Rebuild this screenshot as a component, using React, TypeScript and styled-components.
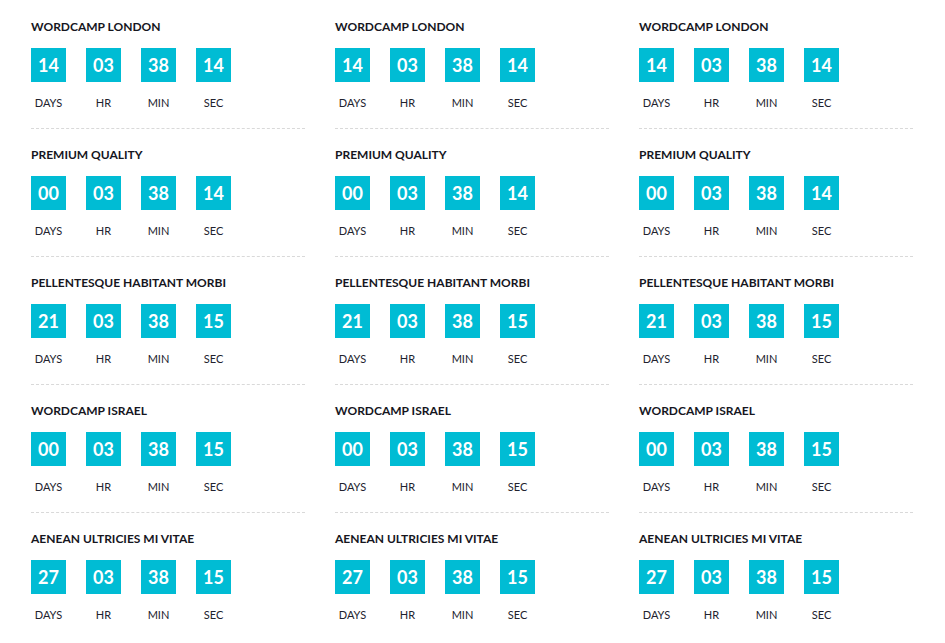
import React from "react";
import styled, { createGlobalStyle } from "styled-components";

const Global = createGlobalStyle`
  html, body { margin: 0; padding: 0; background: #fff; }
  body { font-family: "Source Sans Pro", "Lato", "Noto Sans", sans-serif; }
`;

const Page = styled.div`
  display: grid;
  grid-template-columns: repeat(3, 274px);
  column-gap: 30px;
  padding: 1px 0 0 31px;
`;

const Event = styled.div<{ $last?: boolean }>`
  padding: 18px 0 17px;
  border-bottom: ${(p) => (p.$last ? "none" : "1px dashed #d9d9d9")};
`;

const Title = styled.h3`
  margin: 0;
  font-size: 12px;
  line-height: 16px;
  font-weight: 700;
  color: #16161e;
  text-transform: uppercase;
  letter-spacing: 0;
`;

const Counter = styled.div`
  display: grid;
  grid-template-columns: repeat(4, 35px);
  column-gap: 20px;
  margin-top: 13px;
`;

const Unit = styled.div`
  display: flex;
  flex-direction: column;
  align-items: center;
`;

const Box = styled.div`
  width: 35px;
  height: 34px;
  background: #00bcd4;
  color: #fff;
  font-size: 18px;
  font-weight: 700;
  display: flex;
  align-items: center;
  justify-content: center;
`;

const Label = styled.div`
  margin-top: 13px;
  font-size: 11px;
  line-height: 16px;
  color: #22222e;
  white-space: nowrap;
`;

type Ev = { title: string; values: string[] };

const events: Ev[] = [
  { title: "WordCamp London", values: ["14", "03", "38", "14"] },
  { title: "Premium Quality", values: ["00", "03", "38", "14"] },
  { title: "Pellentesque Habitant Morbi", values: ["21", "03", "38", "15"] },
  { title: "WordCamp Israel", values: ["00", "03", "38", "15"] },
  { title: "Aenean Ultricies Mi Vitae", values: ["27", "03", "38", "15"] },
];

const labels = ["DAYS", "HR", "MIN", "SEC"];

export default function App() {
  const cells: React.ReactNode[] = [];
  events.forEach((ev, r) => {
    for (let c = 0; c < 3; c++) {
      cells.push(
        <Event key={`${r}-${c}`} $last={r === events.length - 1}>
          <Title>{ev.title}</Title>
          <Counter>
            {ev.values.map((v, i) => (
              <Unit key={i}>
                <Box>{v}</Box>
                <Label>{labels[i]}</Label>
              </Unit>
            ))}
          </Counter>
        </Event>
      );
    }
  });
  return (
    <>
      <Global />
      <Page>{cells}</Page>
    </>
  );
}
